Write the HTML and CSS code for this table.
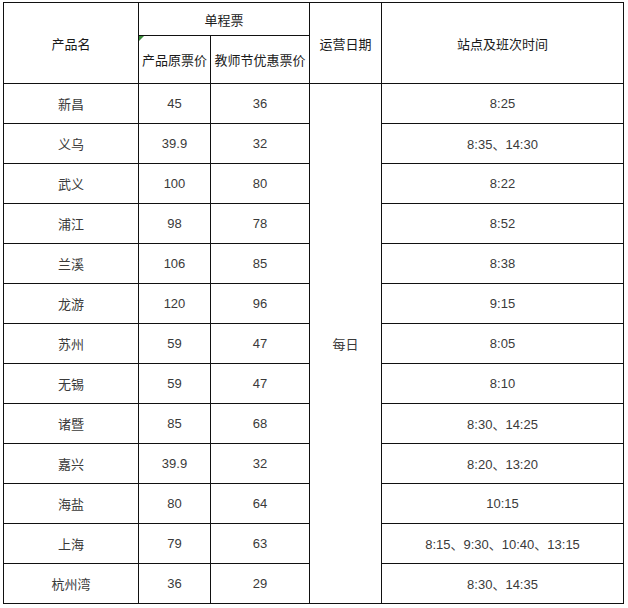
FILE: index.html
```html
<!DOCTYPE html>
<html lang="zh">
<head>
<meta charset="utf-8">
<link rel="stylesheet" href="styles.css">
</head>
<body>
<div class="wrap">
<table class="fares">
  <colgroup>
    <col class="c-name"><col class="c-orig"><col class="c-disc"><col class="c-date"><col class="c-time">
  </colgroup>
  <thead>
    <tr class="h1">
      <th rowspan="2">产品名</th>
      <th colspan="2">单程票</th>
      <th rowspan="2">运营日期</th>
      <th rowspan="2">站点及班次时间</th>
    </tr>
    <tr class="h2">
      <th class="marked">产品原票价</th>
      <th>教师节优惠票价</th>
    </tr>
  </thead>
  <tbody>
    <tr><td>新昌</td><td>45</td><td>36</td><td rowspan="13">每日</td><td>8:25</td></tr>
    <tr><td>义乌</td><td>39.9</td><td>32</td><td>8:35、14:30</td></tr>
    <tr><td>武义</td><td>100</td><td>80</td><td>8:22</td></tr>
    <tr><td>浦江</td><td>98</td><td>78</td><td>8:52</td></tr>
    <tr><td>兰溪</td><td>106</td><td>85</td><td>8:38</td></tr>
    <tr><td>龙游</td><td>120</td><td>96</td><td>9:15</td></tr>
    <tr><td>苏州</td><td>59</td><td>47</td><td>8:05</td></tr>
    <tr><td>无锡</td><td>59</td><td>47</td><td>8:10</td></tr>
    <tr><td>诸暨</td><td>85</td><td>68</td><td>8:30、14:25</td></tr>
    <tr><td>嘉兴</td><td>39.9</td><td>32</td><td>8:20、13:20</td></tr>
    <tr><td>海盐</td><td>80</td><td>64</td><td>10:15</td></tr>
    <tr><td>上海</td><td>79</td><td>63</td><td>8:15、9:30、10:40、13:15</td></tr>
    <tr><td>杭州湾</td><td>36</td><td>29</td><td>8:30、14:35</td></tr>
  </tbody>
</table>
</div>
</body>
</html>
```
FILE: styles.css
```css
html, body {
  margin: 0;
  padding: 0;
  background: #ffffff;
}
.wrap {
  padding: 2px 0 0 3px;
}
.fares {
  border-collapse: collapse;
  table-layout: fixed;
  width: 621px;
  font-family: "Liberation Sans", "Noto Sans CJK SC", sans-serif;
  font-size: 13px;
  color: #3a3a3a;
}
.c-name { width: 135px; }
.c-orig { width: 72px; }
.c-disc { width: 99px; }
.c-date { width: 72px; }
.c-time { width: 242px; }
.fares th, .fares td {
  border: 1px solid #111;
  padding: 0;
  text-align: center;
  vertical-align: middle;
  white-space: nowrap;
}
.fares th {
  font-weight: normal;
  color: #1a1a1a;
}
.h1 th { height: 32px; }
.h2 th { height: 47px; }
.fares tbody td { height: 39px; }
.marked { position: relative; }
.marked::before {
  content: "";
  position: absolute;
  left: 0;
  top: 0;
  border-top: 5px solid #3a8a3a;
  border-right: 5px solid transparent;
}
```
